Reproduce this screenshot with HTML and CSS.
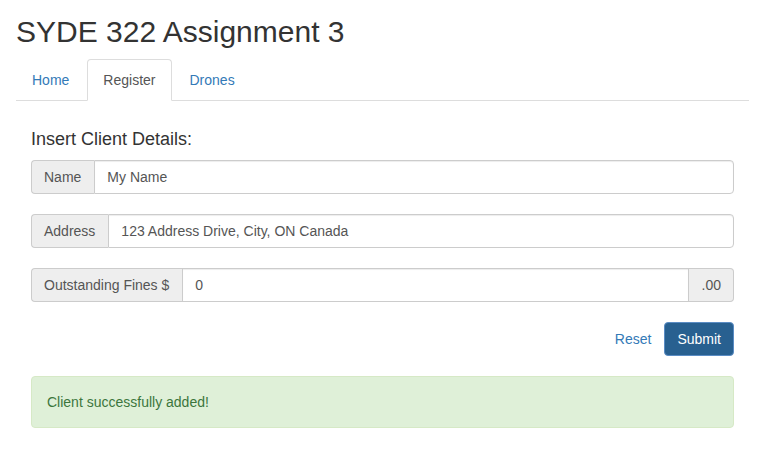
FILE: index.html
```html
<!DOCTYPE html>
<html lang="en">
<head>
    <meta charset="UTF-8">
    <meta name="viewport" content="width=device-width, initial-scale=1.0">
    <title>SYDE 322 Assignment 3</title>
    <link rel="stylesheet" href="styles.css">
</head>
<body>
    <div class="page">
        <h2 class="title">SYDE 322 Assignment 3</h2>

        <ul class="tabs">
            <li><a href="#">Home</a></li>
            <li class="active"><a href="#">Register</a></li>
            <li><a href="#">Drones</a></li>
        </ul>

        <form class="client-form" onsubmit="return false;">
            <h4>Insert Client Details:</h4>

            <div class="input-group">
                <span class="addon">Name</span>
                <input type="text" class="field" value="My Name">
            </div>

            <div class="input-group">
                <span class="addon">Address</span>
                <input type="text" class="field" value="123 Address Drive, City, ON Canada">
            </div>

            <div class="input-group">
                <span class="addon">Outstanding Fines $</span>
                <input type="text" class="field" value="0">
                <span class="addon addon-end">.00</span>
            </div>

            <div class="actions">
                <button type="reset" class="btn btn-link">Reset</button>
                <button type="submit" class="btn btn-primary">Submit</button>
            </div>

            <div class="alert-success">Client successfully added!</div>
        </form>
    </div>
</body>
</html>
```

FILE: styles.css
```css
/* Base */
body {
    margin: 0;
    font-family: "Liberation Sans", Arial, sans-serif;
    font-size: 14px;
    line-height: 20px;
    color: #333;
    background-color: #fff;
}

.page {
    padding: 0 17px 0 16px;
}

.title {
    margin: 15px 0 11px;
    font-size: 30px;
    font-weight: normal;
    line-height: 1.1;
}

/* Tabs */
.tabs {
    list-style: none;
    margin: 0;
    padding: 0;
    display: flex;
    border-bottom: 1px solid #ddd;
}

.tabs li {
    margin-bottom: -1px;
    margin-right: 2px;
}

.tabs a {
    display: block;
    padding: 10px 15px;
    border: 1px solid transparent;
    border-radius: 4px 4px 0 0;
    color: #337ab7;
    text-decoration: none;
}

.tabs .active a {
    color: #555;
    background-color: #fff;
    border-color: #ddd;
    border-bottom-color: transparent;
}

/* Form */
.client-form {
    padding: 0 15px;
}

.client-form h4 {
    margin: 29px 0 10px;
    font-size: 18px;
    font-weight: normal;
    line-height: 1.1;
}

.input-group {
    display: flex;
    height: 34px;
    margin-bottom: 20px;
}

.addon {
    display: flex;
    align-items: center;
    padding: 0 13px 0 12px;
    background-color: #eee;
    border: 1px solid #ccc;
    border-right: 0;
    border-radius: 4px 0 0 4px;
    color: #555;
    white-space: nowrap;
}

.addon-end {
    padding: 0 12px 0 13px;
    border-right: 1px solid #ccc;
    border-left: 0;
    border-radius: 0 4px 4px 0;
}

.field {
    flex: 1;
    min-width: 0;
    box-sizing: border-box;
    height: 34px;
    margin: 0;
    padding: 6px 12px;
    border: 1px solid #ccc;
    border-radius: 0 4px 4px 0;
    box-shadow: inset 0 1px 1px rgba(0, 0, 0, .075);
    font-family: inherit;
    font-size: 14px;
    color: #555;
}

.field:not(:last-child) {
    border-radius: 0;
}

.actions {
    display: flex;
    justify-content: flex-end;
}

.btn {
    height: 34px;
    padding: 6px 12px;
    border: 1px solid transparent;
    border-radius: 4px;
    font-family: inherit;
    font-size: 14px;
    line-height: 20px;
    cursor: pointer;
    background: none;
}

.btn-link {
    color: #337ab7;
}

.btn-primary {
    color: #fff;
    background-color: #286090;
    border-color: #5a8cc4;
}

.alert-success {
    margin-top: 20px;
    padding: 15px;
    border: 1px solid #d6e9c6;
    border-radius: 4px;
    background-color: #dff0d8;
    color: #3c763d;
}
```
